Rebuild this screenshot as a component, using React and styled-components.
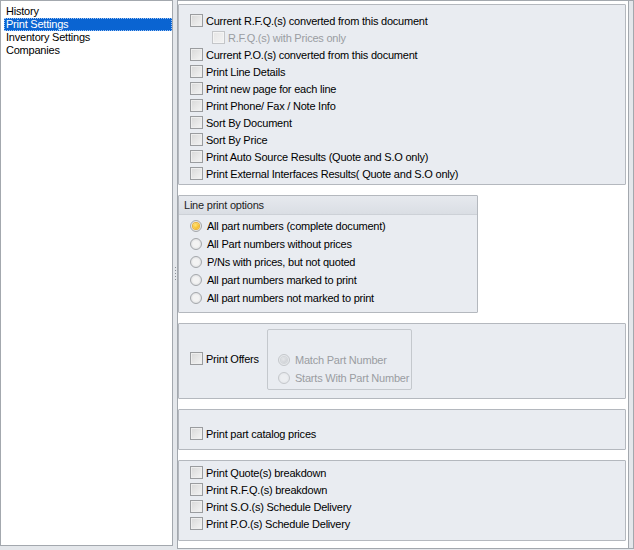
import styled, {createGlobalStyle} from "styled-components";

const Global = createGlobalStyle`
  html, body {
    margin: 0;
    padding: 0;
    background: #e4e7eb;
  }
  * {
    box-sizing: border-box;
  }
`

const Window = styled.div`
  width: 634px;
  height: 550px;
  display: flex;
  background: #e4e7eb;
  font-family: "Liberation Sans", Arial, sans-serif;
  font-size: 11px;
  letter-spacing: -0.22px;
  color: #000;
`

const List = styled.div`
  width: 173px;
  height: 546px;
  background: #fff;
  border: 1px solid #a3a8ae;
  padding: 4px 0 0 3px;
`

const ListItem = styled.div`
  height: 13px;
  line-height: 13px;
  padding-left: 2px;
  white-space: nowrap;
  background: ${p => p.$selected ? "#0a64d2" : "transparent"};
  color: ${p => p.$selected ? "#fff" : "#000"};
  outline: ${p => p.$selected ? "1px dotted #9dc3f5" : "none"};
  outline-offset: -1px;
`

const Splitter = styled.div`
  width: 4px;
  height: 548px;
  display: flex;
  align-items: center;
  justify-content: center;
`

const Grip = styled.div`
  width: 1px;
  height: 14px;
  background: repeating-linear-gradient(to bottom, #8a9098 0 1px, transparent 1px 3px);
`

const Panel = styled.div`
  width: 457px;
  height: 549px;
  border: 1px solid #a3a8ae;
  padding-right: 4px;
`

const Scroll = styled.div`
  height: 100%;
  background: #fff;
  border-right: 1px solid #a3a8ae;
  padding: 3px 2px 0 0;
  display: flex;
  flex-direction: column;
  gap: 10px;
`

const Group = styled.div`
  width: ${p => p.$width || "100%"};
  height: ${p => p.$height}px;
  background: #e9ecf1;
  border: 1px solid #b4b8be;
  border-radius: 1px;
  padding: ${p => p.$pad || "0"};
  display: flex;
  flex-direction: column;
  flex-shrink: 0;
`

const GroupHeader = styled.div`
  height: 19px;
  line-height: 19px;
  padding-left: 5px;
  background: linear-gradient(to bottom, #e6e9ee, #dadee4);
  border-bottom: 1px solid #cdd1d7;
  color: #1e1e1e;
`

const Row = styled.label`
  height: ${p => p.$h || 17}px;
  display: flex;
  align-items: center;
  padding-left: ${p => p.$indent || 11}px;
  gap: 3px;
  white-space: nowrap;
  color: ${p => p.$disabled ? "#9a9da2" : "#000"};
`

const Check = styled.span`
  width: 13px;
  height: 13px;
  flex-shrink: 0;
  border: 1px solid ${p => p.$disabled ? "#c4c6c9" : "#9a9c9f"};
  background: ${p => p.$disabled
    ? "linear-gradient(135deg, #e6e6e6, #f3f3f3)"
    : "linear-gradient(135deg, #d8d8d8, #f4f4f4)"};
  box-shadow: inset 0 0 0 1px ${p => p.$disabled ? "#f4f4f4" : "#eeeeee"};
`

const Radio = styled.span`
  width: 12px;
  height: 12px;
  flex-shrink: 0;
  border-radius: 50%;
  border: 1px solid ${p => p.$disabled ? "#c4c7cb" : "#a4a7ab"};
  background: ${p => p.$disabled
    ? "radial-gradient(circle at 50% 50%, #eceef1 0 40%, #dfe2e6 100%)"
    : "radial-gradient(circle at 50% 50%, #f3f3f3 0 40%, #d2d4d7 100%)"};
  display: flex;
  align-items: center;
  justify-content: center;
  margin-right: 2px;
`

const Dot = styled.span`
  width: 6px;
  height: 6px;
  border-radius: 50%;
  background: ${p => p.$disabled
    ? "radial-gradient(circle at 40% 35%, #e4e6e9, #c7cacf)"
    : "radial-gradient(circle at 40% 35%, #ffe47a, #f2a900)"};
  box-shadow: 0 0 0 1px ${p => p.$disabled ? "#d3d6da" : "#e9b23a"};
`

const OffersLine = styled.div`
  display: flex;
  align-items: flex-start;
  padding-top: 5px;
`

const OffersCheck = styled.div`
  padding-top: 21px;
  width: 88px;
  flex-shrink: 0;
`

const SubGroup = styled.div`
  width: 145px;
  height: 61px;
  border: 1px solid #c4c8cd;
  border-radius: 2px;
  overflow: hidden;
  padding-top: 21px;
`

const mainChecks = [
  {text: "Current R.F.Q.(s) converted from this document"},
  {text: "R.F.Q.(s) with Prices only", sub: true},
  {text: "Current P.O.(s) converted from this document"},
  {text: "Print Line Details"},
  {text: "Print new page for each line"},
  {text: "Print Phone/ Fax / Note Info"},
  {text: "Sort By Document"},
  {text: "Sort By Price"},
  {text: "Print Auto Source Results (Quote and S.O only)"},
  {text: "Print External Interfaces Results( Quote and S.O only)"},
]

const lineOptions = [
  "All part numbers (complete document)",
  "All Part numbers without prices",
  "P/Ns with prices, but not quoted",
  "All part numbers marked to print",
  "All part numbers not marked to print",
]

const breakdowns = [
  "Print Quote(s) breakdown",
  "Print R.F.Q.(s) breakdown",
  "Print S.O.(s) Schedule Delivery",
  "Print P.O.(s) Schedule Delivery",
]

const App = () => {
  return (
    <Window>
      <Global/>
      <List>
        <ListItem>History</ListItem>
        <ListItem $selected>Print Settings</ListItem>
        <ListItem>Inventory Settings</ListItem>
        <ListItem>Companies</ListItem>
      </List>
      <Splitter>
        <Grip/>
      </Splitter>
      <Panel>
        <Scroll>
          <Group $height={181} $pad="7px 0 0 0">
            {mainChecks.map((c) =>
              <Row key={c.text} $disabled={c.sub} $indent={c.sub ? 33 : 11}>
                <Check $disabled={c.sub}/>
                {c.text}
              </Row>
            )}
          </Group>

          <Group $width="300px" $height={118}>
            <GroupHeader>Line print options</GroupHeader>
            <div style={{paddingTop: 2}}>
              {lineOptions.map((o, i) =>
                <Row key={o} $h={18}>
                  <Radio>{i === 0 && <Dot/>}</Radio>
                  {o}
                </Row>
              )}
            </div>
          </Group>

          <Group $height={76}>
            <OffersLine>
              <OffersCheck>
                <Row>
                  <Check/>
                  Print Offers
                </Row>
              </OffersCheck>
              <SubGroup>
                <Row $h={18} $indent={10} $disabled>
                  <Radio $disabled><Dot $disabled/></Radio>
                  Match Part Number
                </Row>
                <Row $h={18} $indent={10} $disabled>
                  <Radio $disabled/>
                  Starts With Part Number
                </Row>
              </SubGroup>
            </OffersLine>
          </Group>

          <Group $height={41} $pad="15px 0 0 0">
            <Row>
              <Check/>
              Print part catalog prices
            </Row>
          </Group>

          <Group $height={81} $pad="3px 0 0 0">
            {breakdowns.map((b) =>
              <Row key={b}>
                <Check/>
                {b}
              </Row>
            )}
          </Group>
        </Scroll>
      </Panel>
    </Window>
  )
}

export default App
